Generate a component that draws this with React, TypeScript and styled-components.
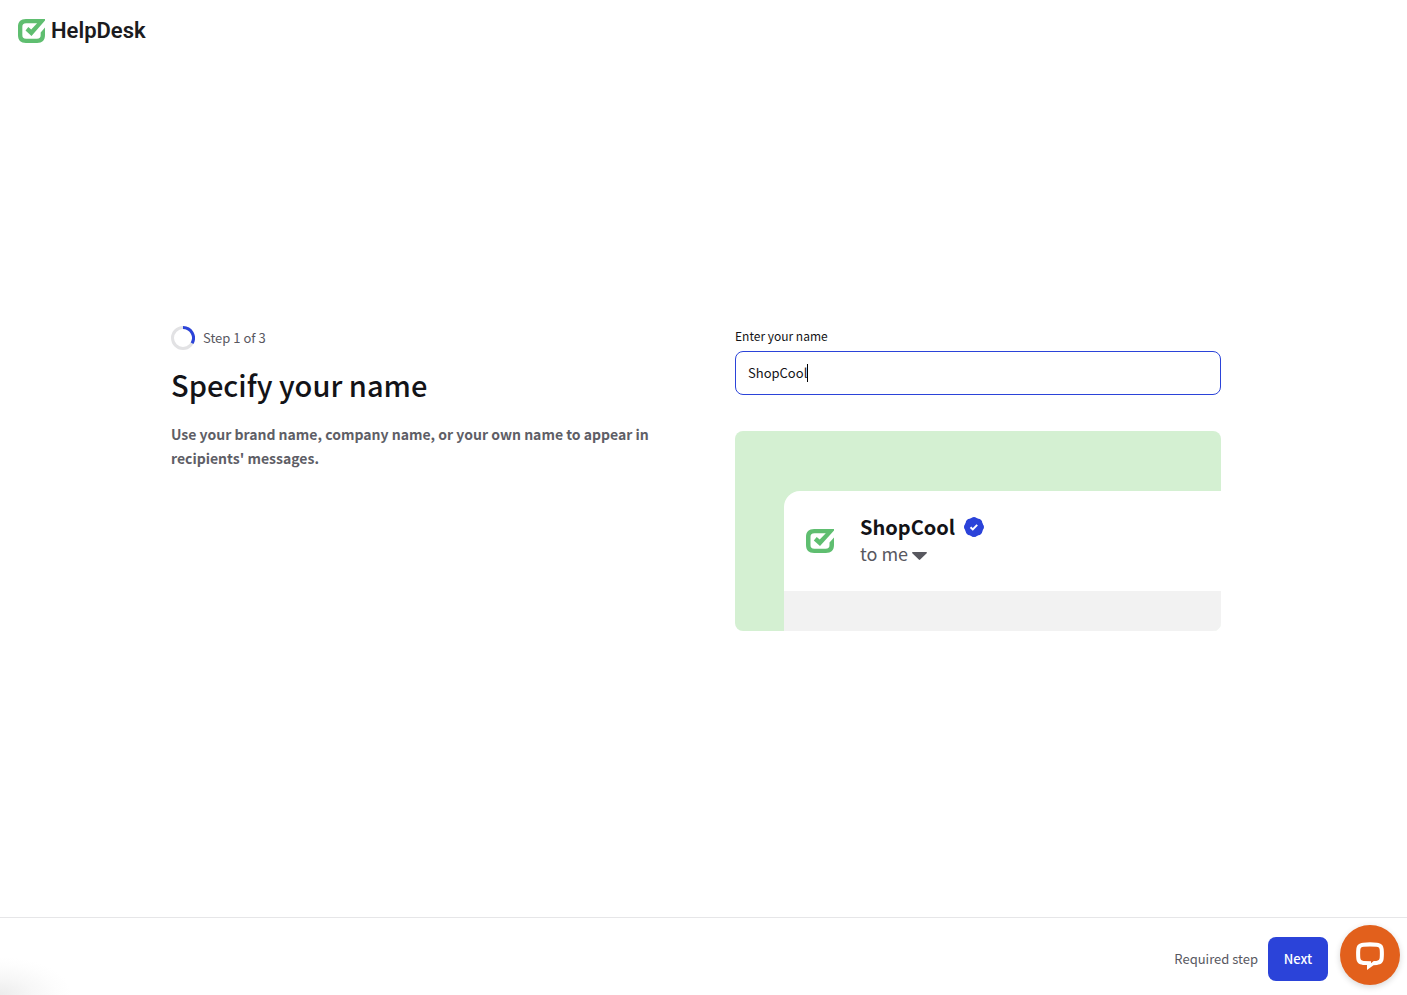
import React, { useState } from "react";
import styled, { createGlobalStyle } from "styled-components";

const GlobalStyle = createGlobalStyle`
  *, *::before, *::after { box-sizing: border-box; }
  html, body, #root { height: 100%; }
  body {
    margin: 0;
    background: #fff;
    color: #131317;
    font-family: "Noto Sans CJK SC", "Open Sans", sans-serif;
    font-size: 13px;
    line-height: 20px;
  }
  h1, p { margin: 0; }
`;

const Page = styled.div`
  display: flex;
  flex-direction: column;
  min-height: 100%;
`;

const Header = styled.header`
  display: flex;
  align-items: center;
  height: 62px;
  padding: 0 18px;
`;

const Brand = styled.a`
  display: flex;
  align-items: center;
  gap: 6px;
  color: #1b1b20;
  font-family: Roboto, sans-serif;
  font-size: 22px;
  font-weight: 600;
  line-height: 28px;
  text-decoration: none;
`;

const Main = styled.main`
  flex: 1;
  display: flex;
  align-items: center;
  justify-content: center;
  padding: 0 39px 22px 24px;
`;

const Columns = styled.div`
  display: grid;
  grid-template-columns: 1fr 1fr;
  gap: 78px;
  width: 100%;
  max-width: 1050px;
`;

const Intro = styled.section`
  display: flex;
  flex-direction: column;
  align-items: flex-start;
`;

const Step = styled.div`
  display: flex;
  align-items: center;
  gap: 8px;
  color: #58585f;
`;

const Title = styled.h1`
  margin-top: 14px;
  font-size: 29px;
  font-weight: 500;
  line-height: 40px;
`;

const Lead = styled.p`
  margin-top: 18px;
  color: #5e5e66;
  font-size: 14px;
  font-weight: 700;
  line-height: 24px;
`;

const Form = styled.section`
  display: flex;
  flex-direction: column;
`;

const Label = styled.label`
  margin-bottom: 5px;
  font-size: 12px;
`;

const Field = styled.div`
  position: relative;
`;

const Input = styled.input`
  display: block;
  width: 100%;
  height: 44px;
  padding: 0 12px 2px;
  border: 1px solid #2b43d9;
  border-radius: 8px;
  outline: none;
  background: #fff;
  color: #131317;
  font: inherit;
  caret-color: transparent;
`;

const Caret = styled.span`
  position: absolute;
  top: 13px;
  left: 72px;
  width: 1px;
  height: 18px;
  background: #000;
`;

const Preview = styled.div`
  margin-top: 36px;
  padding: 60px 0 0 49px;
  border-radius: 8px;
  overflow: hidden;
  background: #d4f0d2;
`;

const Message = styled.div`
  border-top-left-radius: 16px;
  overflow: hidden;
  background: #fff;
`;

const Sender = styled.div`
  display: flex;
  align-items: center;
  gap: 20px;
  height: 100px;
  padding-left: 16px;
`;

const Avatar = styled.div`
  display: flex;
  align-items: center;
  justify-content: center;
  width: 40px;
  height: 40px;
  border-radius: 50%;
`;

const SenderText = styled.div`
  padding-bottom: 2px;
`;

const SenderName = styled.div`
  display: flex;
  align-items: center;
  gap: 8px;
  font-size: 20px;
  font-weight: 700;
  line-height: 27px;
`;

const Recipient = styled.div`
  display: flex;
  align-items: center;
  gap: 4px;
  color: #58585f;
  font-size: 18px;
  line-height: 27px;

  svg { margin-top: 4px; }
`;

const MessageBody = styled.div`
  height: 40px;
  background: #f2f2f2;
`;

const Footer = styled.footer`
  display: flex;
  align-items: center;
  justify-content: flex-end;
  gap: 10px;
  height: 78px;
  padding: 4px 79px 0 0;
  border-top: 1px solid #e6e6e8;
  color: #58585f;
  background: radial-gradient(ellipse 72px 38px at 0 100%, #ececec, #f7f7f7 45%, #fdfdfd 80%, #fff);
`;

const NextButton = styled.button`
  width: 60px;
  height: 44px;
  padding: 0;
  border: 0;
  border-radius: 8px;
  background: #2b43d9;
  color: #fff;
  font: inherit;
  font-weight: 500;
`;

const ChatButton = styled.button`
  position: fixed;
  right: 7px;
  bottom: 10px;
  display: flex;
  align-items: center;
  justify-content: center;
  width: 60px;
  height: 60px;
  padding: 2px 0 0;
  border: 0;
  border-radius: 50%;
  background: #e2601c;
  box-shadow: 0 2px 6px rgba(0, 0, 0, 0.16);
`;

const Mark = ({ width }: { width: number }) => (
  <svg width={width} height="24" viewBox="0 0 28 24" preserveAspectRatio="none" fill="none" aria-hidden="true">
    <path
      d="M28 0v1.400L14 16.900 7.800 11.600l2.900-3.600 3 2.400L19.800 4.200H8.400C5.600 4.200 4.500 5.300 4.500 8v8c0 2.700 1.100 3.700 3.900 3.700h11.200c2.800 0 3.900-1 3.900-3.700v-2.500L28 8.600V16c0 5.200-2.700 8-8.200 8H8.200C2.700 24 0 21.200 0 16V8c0-5.200 2.700-8 8.200-8z"
      fill="#5fbe70"
    />
  </svg>
);

const ProgressRing = () => (
  <svg width="24" height="24" viewBox="0 0 24 24" fill="none" aria-hidden="true">
    <circle cx="12" cy="12" r="10.500" stroke="#e2e2e4" strokeWidth="3" />
    <path d="M12 1.500A10.500 10.500 0 0 1 21.100 17.200" stroke="#2b43d9" strokeWidth="3" />
  </svg>
);

const VerifiedBadge = () => (
  <svg width="22" height="22" viewBox="1 1 22 22" aria-hidden="true">
    <path
      d="M3.85 8.620a4 4 0 0 1 4.780-4.770 4 4 0 0 1 6.740 0 4 4 0 0 1 4.780 4.780 4 4 0 0 1 0 6.740 4 4 0 0 1-4.770 4.780 4 4 0 0 1-6.750 0 4 4 0 0 1-4.780-4.770 4 4 0 0 1 0-6.760Z"
      fill="#2b43d9"
    />
    <circle cx="12" cy="12" r="9.300" fill="#2b43d9" />
    <path d="M8.500 12.200l2.300 2.200 4.400-4.500" fill="none" stroke="#fff" strokeWidth="2" />
  </svg>
);

const DownTriangle = () => (
  <svg width="15" height="8" viewBox="0 0 15 8" aria-hidden="true">
    <path d="M.8 0h13.400c.7 0 1 .8.5 1.300L8.200 7.600c-.4.400-1 .4-1.400 0L.3 1.300C-.2.8.1 0 .8 0z" fill="#58585f" />
  </svg>
);

const ChatIcon = () => (
  <svg width="28" height="28" viewBox="0 0 28 28" aria-hidden="true">
    <path
      fillRule="evenodd"
      d="M7 .7Q14 0 21 .7c4.300.4 6.400 2.600 6.700 6.600q.4 4.700 0 9c-.3 4-2.400 6.200-6.700 6.600l-3.500.3L11 28v-4.900l-4-.2C2.700 22.500.6 20.300.3 16.300q-.4-4.500 0-9C.6 3.300 2.700 1.100 7 .7zM7.700 4.700C5.400 4.900 4.500 5.700 4.300 7.800q-.3 4 0 8c.2 2.100 1.100 3 3.400 3.100l7.300.3v2l2.700-2.200 2.600-.1c2.300-.1 3.200-1 3.400-3.100q.3-4 0-8c-.2-2.100-1.100-2.900-3.400-3.100q-6.300-.5-12.600 0z"
      fill="#fff"
    />
  </svg>
);

export default function App() {
  const [name, setName] = useState("ShopCool");
  return (
    <>
      <GlobalStyle />
      <Page>
        <Header>
          <Brand href="#">
            <Mark width={27} />
            HelpDesk
          </Brand>
        </Header>
        <Main>
          <Columns>
            <Intro>
              <Step>
                <ProgressRing />
                Step 1 of 3
              </Step>
              <Title>Specify your name</Title>
              <Lead>Use your brand name, company name, or your own name to appear in recipients' messages.</Lead>
            </Intro>
            <Form>
              <Label htmlFor="name">Enter your name</Label>
              <Field>
                <Input id="name" type="text" value={name} onChange={(e) => setName(e.target.value)} />
                <Caret aria-hidden="true" />
              </Field>
              <Preview>
                <Message>
                  <Sender>
                    <Avatar>
                      <Mark width={28} />
                    </Avatar>
                    <SenderText>
                      <SenderName>
                        {name}
                        <VerifiedBadge />
                      </SenderName>
                      <Recipient>
                        to me
                        <DownTriangle />
                      </Recipient>
                    </SenderText>
                  </Sender>
                  <MessageBody />
                </Message>
              </Preview>
            </Form>
          </Columns>
        </Main>
        <Footer>
          Required step
          <NextButton type="button">Next</NextButton>
        </Footer>
      </Page>
      <ChatButton type="button" aria-label="Open chat">
        <ChatIcon />
      </ChatButton>
    </>
  );
}
